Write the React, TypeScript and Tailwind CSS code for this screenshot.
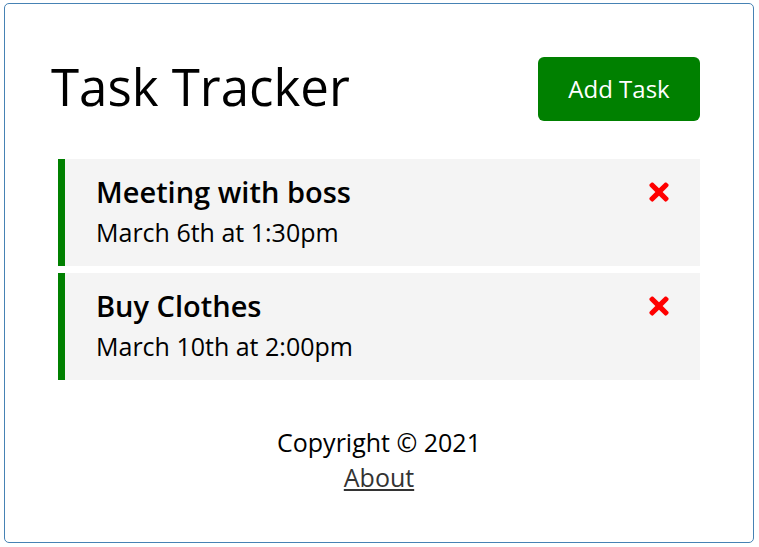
import React, { useState } from "react";
import { FaTimes } from "react-icons/fa";

type Task = {
  id: number;
  text: string;
  day: string;
  reminder: boolean;
};

const initialTasks: Task[] = [
  { id: 1, text: "Meeting with boss", day: "March 6th at 1:30pm", reminder: true },
  { id: 2, text: "Buy Clothes", day: "March 10th at 2:00pm", reminder: true },
];

function Header() {
  return (
    <header className="flex items-center justify-between h-[64px]">
      <h1 className="text-[51px] leading-none font-normal text-black pb-[5px]">Task Tracker</h1>
      <button className="bg-[#008000] text-white rounded-[6px] w-[162px] h-[64px] text-[24px] mr-[7px]">
        Add Task
      </button>
    </header>
  );
}

function TaskItem({ task, onDelete }: { task: Task; onDelete: (id: number) => void }) {
  return (
    <div
      className={
        task.reminder
          ? "bg-[#f4f4f4] mx-[7px] h-[107px] border-l-[7px] border-[#008000] pl-[31px] pr-[27px] pt-[13px]"
          : "bg-[#f4f4f4] mx-[7px] h-[107px] pl-[38px] pr-[27px] pt-[13px]"
      }
    >
      <h3 className="flex items-center justify-between text-[29px] leading-[40px] font-semibold text-black">
        {task.text}
        <FaTimes className="text-[#ff0000] cursor-pointer" size={28} onClick={() => onDelete(task.id)} />
      </h3>
      <p className="text-[25px] leading-[32px] mt-[4px] text-black">{task.day}</p>
    </div>
  );
}

function App() {
  const [tasks, setTasks] = useState<Task[]>(initialTasks);

  return (
    <div className="font-['Open_Sans',sans-serif] bg-white w-[759px] h-[547px] pt-[3px] pl-[4px]">
      <div className="w-[750px] h-[540px] border border-[#4682b4] rounded-[5px] pl-[46px] pr-[46px] pt-[53px]">
        <Header />
        <div className="mt-[38px] flex flex-col gap-[7px]">
          {tasks.map((task) => (
            <TaskItem
              key={task.id}
              task={task}
              onDelete={(id) => setTasks(tasks.filter((t) => t.id !== id))}
            />
          ))}
        </div>
        <footer className="mt-[45px] text-center text-[25px] leading-[35px] text-black">
          <p>Copyright &copy; 2021</p>
          <a href="#" className="text-[#333] underline">
            About
          </a>
        </footer>
      </div>
    </div>
  );
}

export default App;
